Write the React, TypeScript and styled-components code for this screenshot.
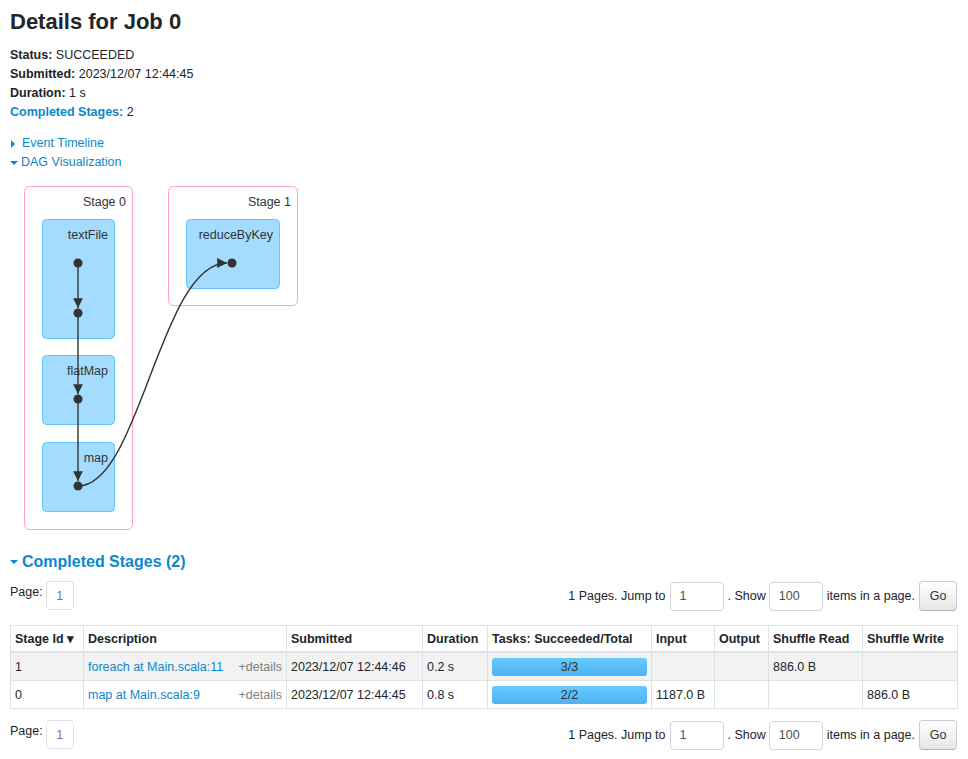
import React from 'react';
import styled, { createGlobalStyle } from 'styled-components';

const GlobalStyle = createGlobalStyle`
  html, body {
    margin: 0;
    padding: 0;
    background: #ffffff;
  }
  body {
    font-family: "Liberation Sans", Arial, sans-serif;
    font-size: 12.5px;
    color: #212529;
  }
`;

const LINK = '#0b88cc';

const Page = styled.div`
  padding: 8px 11px 0 10px;
`;

const Title = styled.h3`
  margin: 0 0 10px 0;
  font-size: 22px;
  line-height: 28px;
  font-weight: bold;
  color: #212529;
`;

const Summary = styled.ul`
  list-style: none;
  margin: 0;
  padding: 0;
`;

const SummaryItem = styled.li`
  line-height: 19px;
`;

const Label = styled.strong<{ $link?: boolean }>`
  color: ${(p) => (p.$link ? LINK : 'inherit')};
`;

const Toggles = styled.div`
  margin-top: 12px;
  display: flex;
  flex-direction: column;
`;

const Toggle = styled.span`
  color: ${LINK};
  line-height: 19px;
  display: flex;
  align-items: center;
  gap: 3px;
`;

const Arrow = styled.span<{ $open?: boolean }>`
  width: 0;
  height: 0;
  ${(p) =>
    p.$open
      ? `border-left: 4px solid transparent; border-right: 4px solid transparent; border-top: 4px solid ${LINK};`
      : `border-top: 4px solid transparent; border-bottom: 4px solid transparent; border-left: 4px solid ${LINK}; margin-left: 1px; margin-right: 4px;`}
`;

const DagBox = styled.div`
  margin-top: 4px;
  height: 364px;
`;

const SectionHeader = styled.h4`
  margin: 12px 0 9px 0;
  font-size: 16px;
  line-height: 20px;
  font-weight: bold;
  color: ${LINK};
  display: flex;
  align-items: center;
  gap: 4px;
`;

const HeaderArrow = styled.span`
  width: 0;
  height: 0;
  border-left: 4px solid transparent;
  border-right: 4px solid transparent;
  border-top: 4px solid ${LINK};
`;

const PagerRow = styled.div`
  display: flex;
  justify-content: space-between;
  align-items: flex-start;
  height: 30px;
`;

const PageLeft = styled.div`
  display: flex;
  align-items: flex-start;
  gap: 3px;
`;

const PageLabel = styled.span`
  line-height: 23px;
`;

const PageBox = styled.span`
  width: 28px;
  height: 29px;
  box-sizing: border-box;
  border: 1px solid #dee2e6;
  border-radius: 4px;
  color: #6c7a86;
  display: flex;
  align-items: center;
  justify-content: center;
`;

const PageRight = styled.div`
  display: flex;
  align-items: center;
  gap: 4px;
`;

const Field = styled.span<{ $w: number }>`
  width: ${(p) => p.$w}px;
  height: 29px;
  box-sizing: border-box;
  border: 1px solid #ced4da;
  border-radius: 4px;
  padding: 0 9px;
  display: flex;
  align-items: center;
  color: #495057;
`;

const ShowText = styled.span`
  margin-right: -1px;
`;

const GoButton = styled.button`
  height: 30px;
  width: 38px;
  padding: 0;
  font-family: inherit;
  font-size: 12.5px;
  color: #333;
  background: linear-gradient(#ffffff, #e6e6e6);
  border: 1px solid #cccccc;
  border-bottom-color: #b3b3b3;
  border-radius: 4px;
`;

const Table = styled.table`
  width: 947px;
  table-layout: fixed;
  border-collapse: collapse;
  margin: 14px 0 11px 0;
`;

const Th = styled.th`
  text-align: left;
  font-weight: bold;
  border: 1px solid #dee2e6;
  border-bottom-width: 2px;
  padding: 4px 4px;
  height: 17px;
  white-space: nowrap;
  overflow: hidden;
`;

const Tr = styled.tr<{ $striped?: boolean }>`
  background: ${(p) => (p.$striped ? '#f2f2f2' : '#ffffff')};
`;

const Td = styled.td`
  border: 1px solid #dee2e6;
  padding: 4px 4px;
  height: 19px;
  white-space: nowrap;
`;

const DescCell = styled.div`
  display: flex;
  justify-content: space-between;
`;

const DescLink = styled.span`
  color: ${LINK};
`;

const Details = styled.span`
  color: #808080;
`;

const Bar = styled.div`
  height: 18px;
  border-radius: 3px;
  background: linear-gradient(#64cbff, #4fb0f0);
  display: flex;
  align-items: center;
  justify-content: center;
  color: #333;
`;

function Dag() {
  return (
    <svg width="300" height="360" viewBox="0 0 300 360">
      <defs>
        <marker id="arr" viewBox="0 0 10 10" refX="10" refY="5" markerWidth="7" markerHeight="7" orient="auto">
          <path d="M0,0 L10,5 L0,10 z" fill="#333" />
        </marker>
      </defs>
      <rect x="14.5" y="10.5" width="108" height="343" rx="5" fill="#fff" stroke="#ffa3b5" />
      <rect x="158.5" y="10.5" width="129" height="119" rx="5" fill="#fff" stroke="#ffa3b5" />
      <g fontFamily="Liberation Sans, Arial, sans-serif" fontSize="12.5" fill="#333" textAnchor="end">
        <text x="116" y="30">Stage 0</text>
        <text x="281" y="30">Stage 1</text>
      </g>
      <g fill="#a3dcff" stroke="#5ec6fb">
        <rect x="32.5" y="43.5" width="72" height="119" rx="4" />
        <rect x="32.5" y="179.5" width="72" height="69" rx="4" />
        <rect x="32.5" y="266.5" width="72" height="69" rx="4" />
        <rect x="176.5" y="43.5" width="93" height="69" rx="4" />
      </g>
      <g fontFamily="Liberation Sans, Arial, sans-serif" fontSize="12.5" fill="#333" textAnchor="end">
        <text x="98" y="63">textFile</text>
        <text x="98" y="199">flatMap</text>
        <text x="98" y="286">map</text>
        <text x="263" y="63">reduceByKey</text>
      </g>
      <g stroke="#333" strokeWidth="1.4" fill="none">
        <line x1="68" y1="87" x2="68" y2="132" markerEnd="url(#arr)" />
        <line x1="68" y1="137" x2="68" y2="218" markerEnd="url(#arr)" />
        <line x1="68" y1="223" x2="68" y2="305" markerEnd="url(#arr)" />
        <path d="M68,310 C130,310 150,87 217,87" markerEnd="url(#arr)" />
      </g>
      <g fill="#333">
        <circle cx="68" cy="87" r="4.5" />
        <circle cx="68" cy="137" r="4.5" />
        <circle cx="68" cy="223" r="4.5" />
        <circle cx="68" cy="310" r="4.5" />
        <circle cx="222" cy="87" r="4.5" />
      </g>
    </svg>
  );
}

function Pager() {
  return (
    <PagerRow>
      <PageLeft>
        <PageLabel>Page:</PageLabel>
        <PageBox>1</PageBox>
      </PageLeft>
      <PageRight>
        <span>1 Pages. Jump to</span>
        <Field $w={54}>1</Field>
        <ShowText>. Show</ShowText>
        <Field $w={54}>100</Field>
        <span>items in a page.</span>
        <GoButton>Go</GoButton>
      </PageRight>
    </PagerRow>
  );
}

const columns = [
  { name: 'Stage Id ▾', w: 73 },
  { name: 'Description', w: 203 },
  { name: 'Submitted', w: 136 },
  { name: 'Duration', w: 65 },
  { name: 'Tasks: Succeeded/Total', w: 164 },
  { name: 'Input', w: 63 },
  { name: 'Output', w: 54 },
  { name: 'Shuffle Read', w: 94 },
  { name: 'Shuffle Write', w: 95 },
];

const stages = [
  { id: '1', desc: 'foreach at Main.scala:11', submitted: '2023/12/07 12:44:46', duration: '0.2 s', tasks: '3/3', input: '', output: '', read: '886.0 B', write: '' },
  { id: '0', desc: 'map at Main.scala:9', submitted: '2023/12/07 12:44:45', duration: '0.8 s', tasks: '2/2', input: '1187.0 B', output: '', read: '', write: '886.0 B' },
];

export default function App() {
  return (
    <Page>
      <GlobalStyle />
      <Title>Details for Job 0</Title>
      <Summary>
        <SummaryItem><Label>Status:</Label> SUCCEEDED</SummaryItem>
        <SummaryItem><Label>Submitted:</Label> 2023/12/07 12:44:45</SummaryItem>
        <SummaryItem><Label>Duration:</Label> 1 s</SummaryItem>
        <SummaryItem><Label $link>Completed Stages:</Label> 2</SummaryItem>
      </Summary>
      <Toggles>
        <Toggle><Arrow />Event Timeline</Toggle>
        <Toggle><Arrow $open />DAG Visualization</Toggle>
      </Toggles>
      <DagBox>
        <Dag />
      </DagBox>
      <SectionHeader><HeaderArrow />Completed Stages (2)</SectionHeader>
      <Pager />
      <Table>
        <colgroup>
          {columns.map((c) => (
            <col key={c.name} style={{ width: c.w }} />
          ))}
        </colgroup>
        <thead>
          <tr>
            {columns.map((c) => (
              <Th key={c.name}>{c.name}</Th>
            ))}
          </tr>
        </thead>
        <tbody>
          {stages.map((s, i) => (
            <Tr key={s.id} $striped={i % 2 === 0}>
              <Td>{s.id}</Td>
              <Td>
                <DescCell>
                  <DescLink>{s.desc}</DescLink>
                  <Details>+details</Details>
                </DescCell>
              </Td>
              <Td>{s.submitted}</Td>
              <Td>{s.duration}</Td>
              <Td><Bar>{s.tasks}</Bar></Td>
              <Td>{s.input}</Td>
              <Td>{s.output}</Td>
              <Td>{s.read}</Td>
              <Td>{s.write}</Td>
            </Tr>
          ))}
        </tbody>
      </Table>
      <Pager />
    </Page>
  );
}
